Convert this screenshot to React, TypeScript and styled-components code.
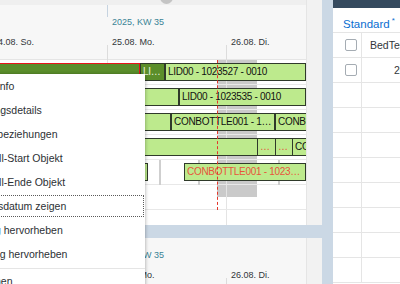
import React from 'react';
import styled, {createGlobalStyle, css} from 'styled-components';

const GlobalStyle = createGlobalStyle`
  html, body {
    margin: 0;
    padding: 0;
  }
  body {
    font-family: "Liberation Sans", Arial, sans-serif;
    color: #32363a;
  }
`;

const DAY_WIDTH = 119;
const ORIGIN = 107; // x of 25.08. on the time axis
const dayX = (offset: number) => ORIGIN + offset * DAY_WIDTH;

const days = [
    {label: '24.08. So.', offset: -1},
    {label: '25.08. Mo.', offset: 0},
    {label: '26.08. Di.', offset: 1},
];

type Tone = 'light' | 'dark';
type BarData = {from: number; to: number; label?: string; tone?: Tone; alert?: boolean; selected?: boolean};
type RowData = {bars: BarData[]; markers?: number[]};

const rows: RowData[] = [
    {
        bars: [
            {from: -20, to: 140, tone: 'dark', selected: true},
            {from: 140, to: 165, tone: 'dark', label: 'LID00 - 1023526 - 0010'},
            {from: 165, to: 306, label: 'LID00 - 1023527 - 0010'},
        ],
    },
    {
        bars: [
            {from: 90, to: 179},
            {from: 179, to: 306, label: 'LID00 - 1023535 - 0010'},
        ],
    },
    {
        bars: [
            {from: 90, to: 171},
            {from: 171, to: 275, label: 'CONBOTTLE001 - 1023540 - 0010'},
            {from: 275, to: 340, label: 'CONBOTTLE001 - 1023541 - 0010'},
        ],
    },
    {
        bars: [
            {from: 60, to: 258},
            {from: 257, to: 276, label: '…', alert: true},
            {from: 275, to: 293, label: '…', alert: true},
            {from: 292, to: 340, label: 'CONBOTTLE001 - 1023550'},
        ],
    },
    {
        bars: [
            {from: 80, to: 148},
            {from: 184, to: 306, label: 'CONBOTTLE001 - 1023523 - 0010', alert: true},
        ],
        markers: [159, 198, 278],
    },
    {bars: []},
];

const menuItems = [
    'Objektinfo',
    'Vorgangsdetails',
    'Objektbeziehungen',
    'Intervall-Start Objekt',
    'Intervall-Ende Objekt',
    'Bedarfsdatum zeigen',
    'Auftrag hervorheben',
    'Planung hervorheben',
];

const Screen = styled.div`
    position: relative;
    width: 400px;
    height: 284px;
    overflow: hidden;
    display: flex;
    gap: 11px;
    background: #cbd8e5;
`;

const LeftColumn = styled.div`
    width: 322px;
    display: flex;
    flex-direction: column;
    gap: 13px;
`;

const Panel = styled.div<{$height?: number}>`
    display: flex;
    background: #f2f2f2;
    overflow: hidden;
    ${({$height}) =>
        $height
            ? css`
                  height: ${$height}px;
              `
            : css`
                  flex: 1;
              `}
`;

const ChartArea = styled.div`
    width: 306px;
    display: flex;
    flex-direction: column;
    background: #fff;
    border-right: 1px solid #e5e5e5;
    overflow: hidden;
`;

const Toolbar = styled.div`
    position: relative;
    height: 5px;
    background: #efefef;
    overflow: hidden;
`;

const ToolbarIcon = styled.div`
    position: absolute;
    left: 160px;
    top: -9px;
    width: 13px;
    height: 13px;
    border-radius: 50%;
    background: #c4c4c4;
`;

const TimeHeader = styled.div`
    position: relative;
    height: 55px;
    flex-shrink: 0;
    background: #f7f7f7;
    border-bottom: 1px solid #e5e5e5;
    box-sizing: border-box;
`;

const WeekDivider = styled.div`
    position: absolute;
    top: 0;
    width: 1px;
    height: 12px;
    background: #c6d3e0;
`;

const WeekLabel = styled.span`
    position: absolute;
    top: 12px;
    font-size: 9px;
    line-height: 11px;
    color: #3a8496;
    white-space: nowrap;
`;

const DayLabel = styled.span`
    position: absolute;
    top: 32px;
    font-size: 9px;
    line-height: 11px;
    white-space: nowrap;
`;

const DayTick = styled.div`
    position: absolute;
    top: 40px;
    width: 1px;
    height: 15px;
    background: #dcdcdc;
`;

const Body = styled.div`
    position: relative;
    flex: 1;
    display: flex;
    flex-direction: column;
`;

const Shade = styled.div`
    position: absolute;
    top: 0;
    height: 137px;
    background: #cacaca;
`;

const GridLine = styled.div`
    position: absolute;
    top: 0;
    bottom: 0;
    width: 1px;
    background: #e4e4e4;
`;

const NowLine = styled.div`
    position: absolute;
    top: 0;
    height: 150px;
    border-left: 1px dashed #e4372b;
    z-index: 2;
`;

const Row = styled.div`
    position: relative;
    height: 25px;
    flex-shrink: 0;
    border-bottom: 1px solid #e8e8e8;
    box-sizing: border-box;
`;

const Bar = styled.div<{$tone: Tone; $alert?: boolean; $selected?: boolean}>`
    position: absolute;
    top: 3px;
    height: 18px;
    box-sizing: border-box;
    padding: 0 2px;
    border: 1px solid ${({$selected}) => ($selected ? '#e8141b' : '#2f3a2a')};
    background: ${({$tone}) => ($tone === 'dark' ? '#5b8e2b' : '#bdea8d')};
    color: ${({$tone, $alert}) => ($alert ? '#e8553b' : $tone === 'dark' ? '#e9f3df' : '#111')};
    font-size: 10px;
    letter-spacing: -0.3px;
    line-height: 16px;
    white-space: nowrap;
    overflow: hidden;
    text-overflow: ellipsis;
    z-index: 1;
`;

const Marker = styled.div`
    position: absolute;
    top: 0;
    width: 2px;
    height: 25px;
    background: #cfcfcf;
`;

const Gutter = styled.div`
    flex: 1;
    background: #f2f2f2;
`;

const Menu = styled.ul`
    position: absolute;
    left: -49px;
    top: 74px;
    width: 194px;
    margin: 0;
    padding: 0;
    list-style: none;
    background: #fff;
    box-shadow: 0 0 3px rgba(0, 0, 0, 0.22), 1px 1px 4px rgba(0, 0, 0, 0.12);
    z-index: 10;
`;

const MenuItem = styled.li<{$focused?: boolean}>`
    height: 24px;
    padding-left: 16px;
    box-sizing: border-box;
    font-size: 10.5px;
    line-height: 24px;
    white-space: nowrap;
    color: #2c3034;
    ${({$focused}) =>
        $focused &&
        css`
            outline: 1px dotted #5a5a5a;
            outline-offset: -2px;
        `}
`;

const MenuSeparator = styled.li`
    height: 2px;
    border-bottom: 1px solid #e5e5e5;
`;

const RightPanel = styled.div`
    flex: 1;
    display: flex;
    flex-direction: column;
    background: #fff;
    overflow: hidden;
`;

const ShellBar = styled.div`
    height: 8px;
    background: #354a5f;
`;

const VariantTitle = styled.div`
    height: 24px;
    padding-left: 10px;
    font-size: 11.5px;
    line-height: 26px;
    color: #0a6ed1;
    white-space: nowrap;

    sup {
        font-size: 8px;
        margin-left: 2px;
    }
`;

const TableRow = styled.div<{$header?: boolean}>`
    display: flex;
    height: ${({$header}) => ($header ? 26 : 25)}px;
    flex-shrink: 0;
    border-bottom: 1px solid #e5e5e5;
    box-sizing: border-box;
    ${({$header}) =>
        $header &&
        css`
            border-top: 1px solid #e5e5e5;
        `}
`;

const SelectCell = styled.div`
    width: 29px;
    flex-shrink: 0;
    display: flex;
    align-items: center;
    padding-left: 12px;
    box-sizing: border-box;
    border-right: 1px solid #e5e5e5;
`;

const Checkbox = styled.div`
    width: 12px;
    height: 12px;
    box-sizing: border-box;
    border: 1px solid #a5acb3;
    border-radius: 2px;
    background: #fff;
`;

const Cell = styled.div<{$indent: number}>`
    padding-left: ${({$indent}) => $indent}px;
    font-size: 10.5px;
    display: flex;
    align-items: center;
    white-space: nowrap;
`;

const GanttHeader: React.FC = () => (
    <TimeHeader>
        <WeekDivider style={{left: dayX(0)}} />
        <WeekLabel style={{left: dayX(0) + 5}}>2025, KW 35</WeekLabel>
        {days.map(day => (
            <React.Fragment key={day.label}>
                <DayLabel style={{left: dayX(day.offset) + 5}}>{day.label}</DayLabel>
                <DayTick style={{left: dayX(day.offset)}} />
            </React.Fragment>
        ))}
    </TimeHeader>
);

const GanttPanel: React.FC<{height?: number; withToolbar?: boolean; data: RowData[]}> = ({
    height,
    withToolbar,
    data,
}) => (
    <Panel $height={height}>
        <ChartArea>
            {withToolbar && (
                <Toolbar>
                    <ToolbarIcon />
                </Toolbar>
            )}
            <GanttHeader />
            {data.length > 0 && (
                <Body>
                    <Shade style={{left: 217, width: 40}} />
                    {days.map(day => (
                        <GridLine key={day.label} style={{left: dayX(day.offset)}} />
                    ))}
                    <NowLine style={{left: 217}} />
                    {data.map((row, index) => (
                        <Row key={index}>
                            {row.markers?.map(x => (
                                <Marker key={x} style={{left: x}} />
                            ))}
                            {row.bars.map(bar => (
                                <Bar
                                    key={bar.from}
                                    $tone={bar.tone ?? 'light'}
                                    $alert={bar.alert}
                                    $selected={bar.selected}
                                    style={{left: bar.from, width: bar.to - bar.from}}
                                >
                                    {bar.label}
                                </Bar>
                            ))}
                        </Row>
                    ))}
                </Body>
            )}
        </ChartArea>
        <Gutter />
    </Panel>
);

export default function App() {
    return (
        <>
            <GlobalStyle />
            <Screen>
                <LeftColumn>
                    <GanttPanel height={225} withToolbar data={rows} />
                    <GanttPanel data={[]} />
                </LeftColumn>
                <RightPanel>
                    <ShellBar />
                    <VariantTitle>
                        Standard<sup>*</sup>
                    </VariantTitle>
                    <TableRow $header>
                        <SelectCell>
                            <Checkbox />
                        </SelectCell>
                        <Cell $indent={8}>BedTermin</Cell>
                    </TableRow>
                    {Array.from({length: 9}).map((_, index) => (
                        <TableRow key={index}>
                            <SelectCell>{index === 0 && <Checkbox />}</SelectCell>
                            <Cell $indent={32}>{index === 0 ? '26.08.2025' : ''}</Cell>
                        </TableRow>
                    ))}
                </RightPanel>
                <Menu>
                    {menuItems.map(item => (
                        <MenuItem key={item} $focused={item === 'Bedarfsdatum zeigen'}>
                            {item}
                        </MenuItem>
                    ))}
                    <MenuSeparator />
                    <MenuItem>Entfernen</MenuItem>
                </Menu>
            </Screen>
        </>
    );
}
